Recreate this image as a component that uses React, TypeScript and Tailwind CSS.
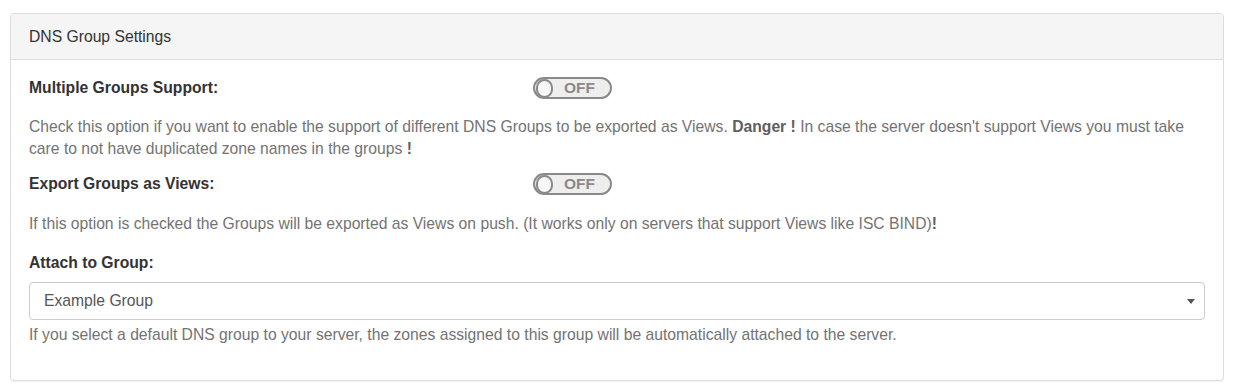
import React from 'react';

const Toggle: React.FC = () => (
  <div className="flex h-[22px] w-[79px] items-center rounded-full border-2 border-[#8a8a8a] bg-[#eeeeee] pl-[1px]">
    <span className="h-[19px] w-[17px] rounded-full border-2 border-[#8a8a8a] bg-[#f7f7f7]" />
    <span className="ml-[11px] text-[15.5px] font-bold leading-none text-[#8a8a8a]">OFF</span>
  </div>
);

const App: React.FC = () => {
  return (
    <div className="h-[392px] w-[1235px] bg-white pl-[10px] pr-[11px] pt-[13px] font-['Liberation_Sans',Arial,sans-serif] text-[15.7px] text-[#333]">
      <div className="rounded-[4px] border border-[#dddddd] bg-white shadow-[0_1px_1px_rgba(0,0,0,0.05)]">
        {/* Header */}
        <div className="flex h-[46px] items-center rounded-t-[4px] border-b border-[#dddddd] bg-[#f5f5f5] px-[18px]">
          DNS Group Settings
        </div>

        <div className="px-[18px] pb-[34px] pt-[17px]">
          {/* Multiple groups */}
          <div className="flex h-[22px] items-center">
            <label className="w-[504px] font-bold">Multiple Groups Support:</label>
            <Toggle />
          </div>
          <p className="mt-[17px] pr-[10px] leading-[22px] text-[#737373]">
            Check this option if you want to enable the support of different DNS Groups to be exported as Views.{' '}
            <span className="font-bold text-[#5e5e5e]">Danger !</span> In case the server doesn't support Views you must
            take care to not have duplicated zone names in the groups <span className="font-bold text-[#5e5e5e]">!</span>
          </p>

          {/* Export as views */}
          <div className="mt-[13px] flex h-[22px] items-center">
            <label className="w-[504px] font-bold">Export Groups as Views:</label>
            <Toggle />
          </div>
          <p className="mt-[18px] leading-[22px] text-[#737373]">
            If this option is checked the Groups will be exported as Views on push. (It works only on servers that support
            Views like ISC BIND)<span className="font-bold text-[#5e5e5e]">!</span>
          </p>

          {/* Attach to group */}
          <label className="mt-[17px] block font-bold leading-[22px]">Attach to Group:</label>
          <div className="mt-[8px] flex h-[38px] items-center justify-between rounded-[4px] border border-[#cccccc] pl-[14px] pr-[7px] text-[#555]">
            <span>Example Group</span>
            <svg width="8" height="5" viewBox="0 0 8 5" className="mr-[2px]">
              <path d="M0 0 L8 0 L4 5 Z" fill="#555" />
            </svg>
          </div>
          <p className="mt-[4px] leading-[22px] text-[#737373]">
            If you select a default DNS group to your server, the zones assigned to this group will be automatically
            attached to the server.
          </p>
        </div>
      </div>
    </div>
  );
};

export default App;
